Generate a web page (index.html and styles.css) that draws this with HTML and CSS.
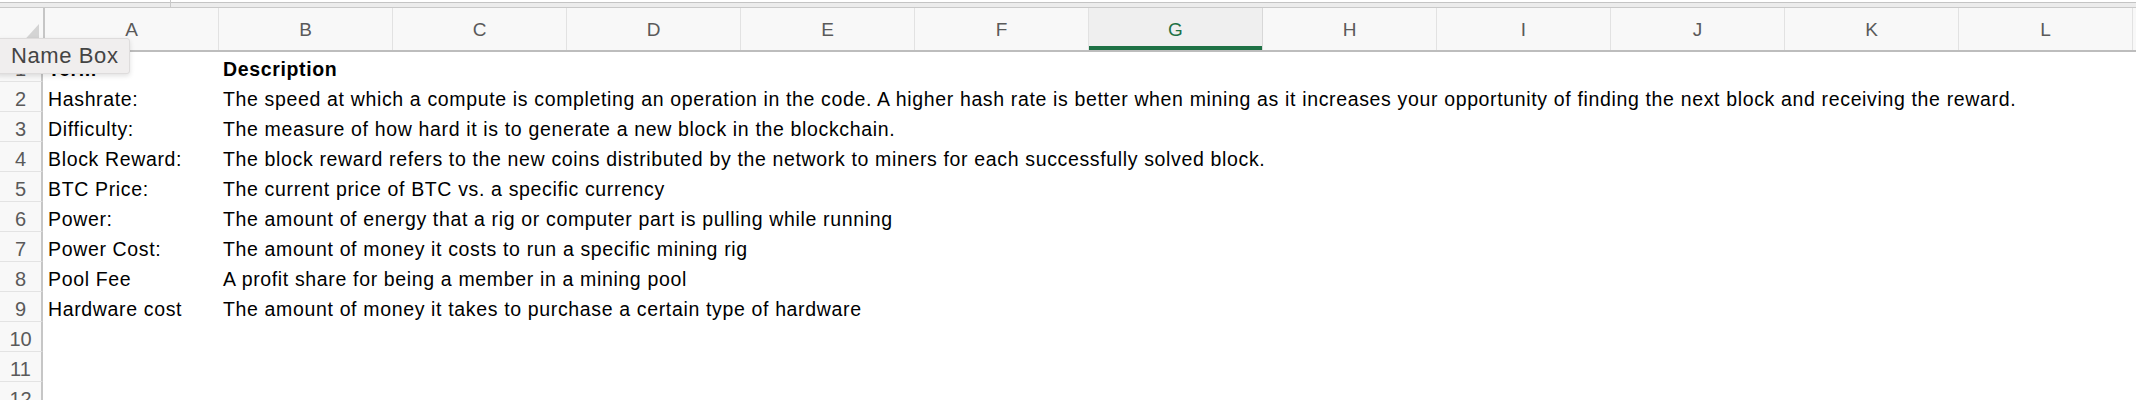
FILE: index.html
```html
<!DOCTYPE html>
<html lang="en">
  <head>
    <meta charset="UTF-8" />
    <meta name="viewport" content="width=device-width, initial-scale=1.0" />
    <title>Mining Terms</title>
    <link rel="stylesheet" href="styles.css">
  </head>
  <body>
    <div class="toolbar-edge">
      <span class="edge-divider"></span>
    </div>

    <div class="sheet">
      <div class="col-headers">
        <div class="corner"><span class="corner-tri"></span></div>
        <div class="col-head">A</div>
        <div class="col-head">B</div>
        <div class="col-head">C</div>
        <div class="col-head">D</div>
        <div class="col-head">E</div>
        <div class="col-head">F</div>
        <div class="col-head selected">G</div>
        <div class="col-head">H</div>
        <div class="col-head">I</div>
        <div class="col-head">J</div>
        <div class="col-head">K</div>
        <div class="col-head">L</div>
        <div class="col-head rest"></div>
      </div>

      <div class="rows">
        <div class="row">
          <div class="row-head">1</div>
          <div class="cell term bold">Term</div>
          <div class="cell desc bold">Description</div>
        </div>
        <div class="row">
          <div class="row-head">2</div>
          <div class="cell term">Hashrate:</div>
          <div class="cell desc">The speed at which a compute is completing an operation in the code. A higher hash rate is better when mining as it increases your opportunity of finding the next block and receiving the reward.</div>
        </div>
        <div class="row">
          <div class="row-head">3</div>
          <div class="cell term">Difficulty:</div>
          <div class="cell desc">The measure of how hard it is to generate a new block in the blockchain.</div>
        </div>
        <div class="row">
          <div class="row-head">4</div>
          <div class="cell term">Block Reward:</div>
          <div class="cell desc">The block reward refers to the new coins distributed by the network to miners for each successfully solved block.</div>
        </div>
        <div class="row">
          <div class="row-head">5</div>
          <div class="cell term">BTC Price:</div>
          <div class="cell desc">The current price of BTC vs. a specific currency</div>
        </div>
        <div class="row">
          <div class="row-head">6</div>
          <div class="cell term">Power:</div>
          <div class="cell desc">The amount of energy that a rig or computer part is pulling while running</div>
        </div>
        <div class="row">
          <div class="row-head">7</div>
          <div class="cell term">Power Cost:</div>
          <div class="cell desc">The amount of money it costs to run a specific mining rig</div>
        </div>
        <div class="row">
          <div class="row-head">8</div>
          <div class="cell term">Pool Fee</div>
          <div class="cell desc">A profit share for being a member in a mining pool</div>
        </div>
        <div class="row">
          <div class="row-head">9</div>
          <div class="cell term">Hardware cost</div>
          <div class="cell desc">The amount of money it takes to purchase a certain type of hardware</div>
        </div>
        <div class="row">
          <div class="row-head">10</div>
        </div>
        <div class="row">
          <div class="row-head">11</div>
        </div>
        <div class="row">
          <div class="row-head">12</div>
        </div>
      </div>

      <!-- tooltip over the corner -->
      <div class="name-box-tip">Name Box</div>
    </div>
  </body>
</html>
```

FILE: styles.css
```css
body {
  margin: 0;
  overflow: hidden;
  background: #fff;
  font-family: "Liberation Sans", Arial, Helvetica, sans-serif;
}

.toolbar-edge {
  height: 4px;
  margin-top: 2px;
  border-top: 1px solid #c4c4c4;
  border-bottom: 1px solid #c9c9c9;
  background: #ececec;
  position: relative;
}

.edge-divider {
  position: absolute;
  left: 170px;
  top: -3px;
  width: 1px;
  height: 9px;
  background: #c9c9c9;
}

.sheet {
  position: relative;
}

.col-headers {
  display: flex;
  height: 42px;
  background: #f8f8f8;
  border-bottom: 2px solid #bdbdbd;
}

.corner {
  width: 43px;
  flex: none;
  border-right: 2px solid #c6c6c6;
  position: relative;
}

.corner-tri {
  position: absolute;
  right: 4px;
  bottom: 4px;
  width: 0;
  height: 0;
  border-left: 20px solid transparent;
  border-bottom: 22px solid #d4d4d4;
}

.col-head {
  width: 173px;
  flex: none;
  border-right: 1px solid #e2e2e2;
  display: flex;
  align-items: center;
  justify-content: center;
  font-size: 19px;
  color: #5a5a5a;
  padding-top: 2px;
}

.col-head.selected {
  background: #efefef;
  color: #1e7145;
  box-shadow: inset 0 -4px 0 #1e7145;
  border-right-color: #d8d8d8;
}

.col-head.rest {
  width: auto;
  flex: 1;
  border-right: none;
}

.row {
  display: flex;
  height: 30px;
}

.row-head {
  width: 43px;
  flex: none;
  border-right: 2px solid #c6c6c6;
  border-bottom: 1px solid #e3e3e3;
  box-sizing: border-box;
  background: #f8f8f8;
  color: #5a5a5a;
  font-size: 20px;
  display: flex;
  align-items: flex-end;
  justify-content: center;
  padding-bottom: 0;
}

.cell {
  display: flex;
  align-items: flex-end;
  padding: 0 0 1px 5px;
  font-size: 19.5px;
  letter-spacing: 0.65px;
  color: #000;
  white-space: nowrap;
  box-sizing: border-box;
}

.cell.term {
  width: 174px;
  flex: none;
}

.cell.desc {
  flex: 1;
  padding-left: 6px;
}

.bold {
  font-weight: bold;
}

.name-box-tip {
  position: absolute;
  left: -4px;
  top: 30px;
  width: 118px;
  height: 34px;
  padding-left: 14px;
  display: flex;
  align-items: center;
  background: #f0eeee;
  border: 1px solid #dedcdc;
  border-radius: 3px;
  box-shadow: 0 2px 5px rgba(0, 0, 0, 0.12);
  font-size: 22px;
  letter-spacing: 0.6px;
  color: #444;
}
```
